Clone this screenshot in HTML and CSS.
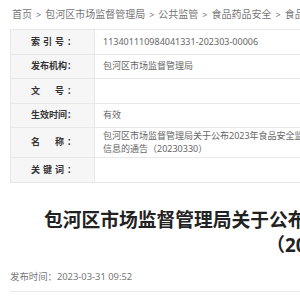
FILE: index.html
```html
<!DOCTYPE html>
<html lang="zh-CN">
<head>
<meta charset="utf-8">
<title>包河区市场监督管理局</title>
<link rel="stylesheet" href="styles.css">
</head>
<body>
<div class="page">
  <div class="crumbs">
    <a href="#">首页</a><span class="sep">&gt;</span><a href="#">包河区市场监督管理局</a><span class="sep">&gt;</span><a href="#">公共监管</a><span class="sep">&gt;</span><a href="#">食品药品安全</a><span class="sep">&gt;</span><a href="#">食品安全抽检</a>
  </div>
  <table class="meta">
    <tr><th><span class="lbl spaced">索引号：</span></th><td>113401110984041331-202303-00006</td></tr>
    <tr><th><span class="lbl">发布机构：</span></th><td>包河区市场监督管理局</td></tr>
    <tr><th><span class="lbl spaced">文　号：</span></th><td></td></tr>
    <tr><th><span class="lbl">生效时间：</span></th><td>有效</td></tr>
    <tr class="tall"><th><span class="lbl spaced">名　称：</span></th><td>包河区市场监督管理局关于公布2023年食品安全监督抽检信息的通告（20230330）</td></tr>
    <tr><th><span class="lbl spaced">关键词：</span></th><td></td></tr>
  </table>
  <h1 class="title">包河区市场监督管理局关于公布2023年食品安全监督抽检信息的通告（20230330）</h1>
  <div class="pubinfo">发布时间：2023-03-31 09:52</div>
</div>
</body>
</html>
```
FILE: styles.css
```css
html, body {
  margin: 0;
  padding: 0;
  overflow: hidden;
  background: #fff;
}
body {
  font-family: "Noto Sans", "Noto Sans CJK SC", sans-serif;
}
.page {
  padding: 0 10px;
  width: 640px;
}
.crumbs {
  height: 29px;
  line-height: 29px;
  font-size: 10px;
  color: #777;
  white-space: nowrap;
  padding-left: 2px;
}
.crumbs a {
  color: #777;
  text-decoration: none;
}
.crumbs .sep {
  margin: 0 4px;
  font-size: 9px;
}
.meta {
  border-collapse: collapse;
  width: 332px;
  font-size: 9px;
  line-height: 12.5px;
}
.meta th, .meta td {
  border: 1px solid #e8e8e8;
  height: 24.5px;
  padding: 0;
  box-sizing: border-box;
}
.meta th {
  width: 84px;
  background: #f6f6f6;
  text-align: left;
  padding-left: 20px;
  color: #333;
  font-weight: bold;
  white-space: nowrap;
}
.meta td {
  color: #666;
  padding: 2px 8px;
}
.meta .tall td, .meta .tall th {
  height: 29px;
}
.lbl.spaced {
  letter-spacing: 3px;
}
.title {
  margin: 24px 0 0;
  font-size: 18.75px;
  line-height: 25px;
  font-weight: bold;
  color: #222;
  text-align: center;
  width: 636px;
}
.pubinfo {
  margin-top: 12px;
  font-size: 9.4px;
  line-height: 16px;
  color: #777;
  padding-bottom: 6px;
  border-bottom: 1px solid #eaeaea;
}
```
